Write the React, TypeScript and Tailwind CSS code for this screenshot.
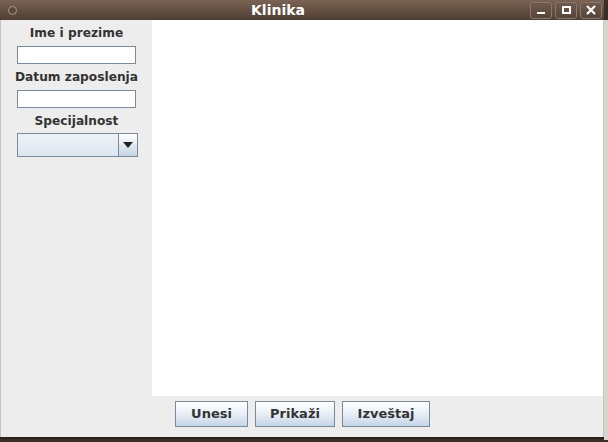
import React from "react";

function WinButton({ children }: { children: React.ReactNode }) {
  return (
    <div className="flex h-[17px] w-[22px] items-center justify-center rounded-[3px] border border-[#8a776a] bg-gradient-to-b from-[#6e5a4d] to-[#574539]">
      {children}
    </div>
  );
}

function Field() {
  return <div className="h-[18px] w-[119px] border border-[#7a8a99] bg-white" />;
}

function Btn({ label, w }: { label: string; w: string }) {
  return (
    <button
      className={`${w} h-[26px] border border-[#7a8a99] bg-gradient-to-b from-[#ffffff] via-[#e8eef6] to-[#c4d5e8] text-[13px] font-bold text-[#333333]`}
    >
      {label}
    </button>
  );
}

export default function App() {
  return (
    <div
      className="relative h-[442px] w-[608px] overflow-hidden bg-[#3a2e26]"
      style={{ fontFamily: '"DejaVu Sans", sans-serif' }}
    >
      <div className="flex h-[439px] w-[604px] flex-col">
        {/* title bar */}
        <div className="relative flex h-[20px] items-center bg-gradient-to-b from-[#7a6354] to-[#4f3e33]">
          <div className="ml-[8px] h-[9px] w-[9px] rounded-full border border-[#a89a90] bg-[#5a483c]" />
          <div className="absolute left-0 top-0 flex h-[20px] w-[556px] items-center justify-center text-[14px] font-bold text-white">
            Klinika
          </div>
          <div className="ml-auto mr-[2px] flex gap-[3px]">
            <WinButton>
              <div className="mt-[6px] h-[2px] w-[8px] bg-white" />
            </WinButton>
            <WinButton>
              <div className="h-[8px] w-[9px] border-2 border-white" />
            </WinButton>
            <WinButton>
              <svg width="10" height="10" viewBox="0 0 10 10">
                <path d="M1 1 L9 9 M9 1 L1 9" stroke="white" strokeWidth="2.2" />
              </svg>
            </WinButton>
          </div>
        </div>

        {/* body */}
        <div className="flex flex-1 flex-col border-x border-[#c9c4bc] bg-[#ededed]">
          <div className="flex flex-1">
            <div className="flex w-[151px] flex-col items-center pt-[5px] text-[12.2px] font-bold text-[#333333]">
              <div className="leading-[17px]">Ime i prezime</div>
              <div className="mt-[4px]">
                <Field />
              </div>
              <div className="mt-[5px] leading-[17px]">Datum zaposlenja</div>
              <div className="mt-[4px]">
                <Field />
              </div>
              <div className="mt-[5px] leading-[17px]">Specijalnost</div>
              <div className="mt-[3px] ml-[2px] flex h-[24px] w-[121px] border border-[#7a8a99]">
                <div className="flex-1 bg-gradient-to-b from-[#eef2f7] to-[#dde6f0]" />
                <div className="flex w-[19px] items-center justify-center border-l border-[#7a8a99] bg-gradient-to-b from-[#ffffff] to-[#c4d5e8]">
                  <svg width="10" height="6" viewBox="0 0 10 6">
                    <path d="M0 0 L10 0 L5 6 Z" fill="#222222" />
                  </svg>
                </div>
              </div>
            </div>
            <div className="flex-1 bg-white" />
          </div>
          <div className="flex h-[41px] gap-[7px] pl-[174px] pt-[5px]">
            <Btn label="Unesi" w="w-[73px]" />
            <Btn label="Prikaži" w="w-[80px]" />
            <Btn label="Izveštaj" w="w-[88px]" />
          </div>
        </div>
        <div className="h-[2px] bg-[#2a221c]" />
      </div>
      <div className="absolute right-0 top-[20px] h-[420px] w-[4px] bg-[#d8d4ce]" />
    </div>
  );
}
